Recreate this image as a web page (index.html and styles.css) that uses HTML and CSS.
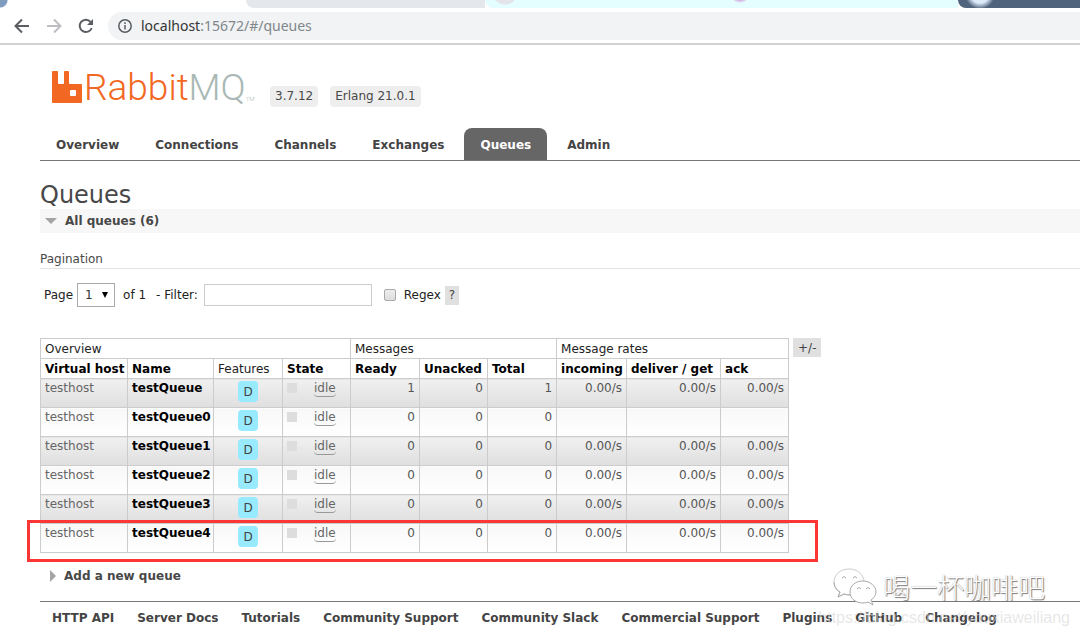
FILE: index.html
```html
<!DOCTYPE html>
<html lang="en">
<head>
    <meta charset="UTF-8">
    <meta name="viewport" content="width=device-width, initial-scale=1.0">
    <title>RabbitMQ Management</title>
    <link rel="stylesheet" href="styles.css">
</head>
<body>
    <!-- Browser bar -->
    <div class="tab-strip">
        <div class="strip-first"></div>
        <div class="strip-grey"></div>
        <div class="strip-cyan"></div>
        <div class="strip-dark"></div>
    </div>
    <div class="toolbar">
        <button type="button" aria-label="Back">
            <svg width="16" height="16" viewBox="0 0 16 16" fill="none" stroke="#5a5e63" stroke-width="2"><path d="M15 8H2M8 1.5L1.5 8L8 14.5"/></svg>
        </button>
        <button type="button" aria-label="Forward">
            <svg width="16" height="16" viewBox="0 0 16 16" fill="none" stroke="#bcbec1" stroke-width="2"><path d="M1 8H14M8 1.5L14.5 8L8 14.5"/></svg>
        </button>
        <button type="button" aria-label="Reload">
            <svg width="16" height="16" viewBox="0 0 16 16" fill="none" stroke="#5a5e63" stroke-width="2"><path d="M13.7 10A6.2 6.2 0 1 1 12.6 3.8"/><path d="M15 1V7H9Z" fill="#5a5e63" stroke="none"/></svg>
        </button>
        <div class="address">
            <svg width="14" height="14" viewBox="0 0 14 14" fill="none" stroke="#5a5e63" stroke-width="1.5"><circle cx="7" cy="7" r="6.2"/><path d="M7 6V10.5M7 3.3V5"/></svg>
            <span class="url"><b>localhost</b>:15672/#/queues</span>
        </div>
    </div>

    <div class="page">
        <!-- Header -->
        <div class="header">
            <a href="#" class="logo">
                <svg width="30" height="32" viewBox="0 0 30 32"><path fill="#f26822" fill-rule="evenodd" d="M1 0H5Q6 0 6 1V12Q6 13 7 13H11Q12 13 12 12V1Q12 0 13 0H16Q17 0 17 1V12Q17 13 18 13H29Q30 13 30 14V31Q30 32 29 32H1Q0 32 0 31V1Q0 0 1 0ZM19 19Q18 19 18 20V24Q18 25 19 25H23Q24 25 24 24V20Q24 19 23 19Z"/></svg>
                <span class="rabbit">Rabbit</span><span class="mq">MQ</span><span class="tm">TM</span>
            </a>
            <span class="version">3.7.12</span>
            <span class="version">Erlang 21.0.1</span>
        </div>

        <!-- Navigation -->
        <nav class="tabs">
            <a href="#">Overview</a>
            <a href="#">Connections</a>
            <a href="#">Channels</a>
            <a href="#">Exchanges</a>
            <a href="#" class="selected">Queues</a>
            <a href="#">Admin</a>
        </nav>

        <h1>Queues</h1>
        <h2 class="section open">All queues (6)</h2>

        <h3>Pagination</h3>
        <form class="filter">
            <label for="page">Page</label>
            <span class="select">
                <select id="page"><option>1</option></select>
            </span>
            <span class="of">of 1</span>
            <label for="filter" class="dash">- Filter:</label>
            <input type="text" id="filter">
            <input type="checkbox" id="regex">
            <label for="regex">Regex</label>
            <button type="button" class="help">?</button>
        </form>

        <!-- Queue list -->
        <div class="list">
            <div class="table-wrap">
                <table>
                    <colgroup>
                        <col class="c-vhost"><col class="c-name"><col class="c-num"><col class="c-narrow"><col class="c-num"><col class="c-narrow"><col class="c-num"><col class="c-in"><col class="c-get"><col class="c-narrow">
                    </colgroup>
                    <thead>
                        <tr class="groups">
                            <th colspan="4">Overview</th>
                            <th colspan="3">Messages</th>
                            <th colspan="3">Message rates</th>
                        </tr>
                        <tr>
                            <th>Virtual host</th>
                            <th>Name</th>
                            <th class="plain">Features</th>
                            <th>State</th>
                            <th>Ready</th>
                            <th>Unacked</th>
                            <th>Total</th>
                            <th>incoming</th>
                            <th>deliver / get</th>
                            <th>ack</th>
                        </tr>
                    </thead>
                    <tbody>
                        <tr><td>testhost</td><td><a href="#">testQueue</a></td><td class="c"><abbr class="tag">D</abbr></td><td class="state"><abbr>idle</abbr></td><td class="r">1</td><td class="r">0</td><td class="r">1</td><td class="r">0.00/s</td><td class="r">0.00/s</td><td class="r">0.00/s</td></tr>
                        <tr><td>testhost</td><td><a href="#">testQueue0</a></td><td class="c"><abbr class="tag">D</abbr></td><td class="state"><abbr>idle</abbr></td><td class="r">0</td><td class="r">0</td><td class="r">0</td><td></td><td></td><td></td></tr>
                        <tr><td>testhost</td><td><a href="#">testQueue1</a></td><td class="c"><abbr class="tag">D</abbr></td><td class="state"><abbr>idle</abbr></td><td class="r">0</td><td class="r">0</td><td class="r">0</td><td class="r">0.00/s</td><td class="r">0.00/s</td><td class="r">0.00/s</td></tr>
                        <tr><td>testhost</td><td><a href="#">testQueue2</a></td><td class="c"><abbr class="tag">D</abbr></td><td class="state"><abbr>idle</abbr></td><td class="r">0</td><td class="r">0</td><td class="r">0</td><td class="r">0.00/s</td><td class="r">0.00/s</td><td class="r">0.00/s</td></tr>
                        <tr><td>testhost</td><td><a href="#">testQueue3</a></td><td class="c"><abbr class="tag">D</abbr></td><td class="state"><abbr>idle</abbr></td><td class="r">0</td><td class="r">0</td><td class="r">0</td><td class="r">0.00/s</td><td class="r">0.00/s</td><td class="r">0.00/s</td></tr>
                        <tr><td>testhost</td><td><a href="#">testQueue4</a></td><td class="c"><abbr class="tag">D</abbr></td><td class="state"><abbr>idle</abbr></td><td class="r">0</td><td class="r">0</td><td class="r">0</td><td class="r">0.00/s</td><td class="r">0.00/s</td><td class="r">0.00/s</td></tr>
                    </tbody>
                </table>
                <div class="highlight"></div>
            </div>
            <button type="button" class="columns">+/-</button>
        </div>

        <h2 class="section">Add a new queue</h2>

        <!-- Footer -->
        <div class="footer">
            <a href="#">HTTP API</a>
            <a href="#">Server Docs</a>
            <a href="#">Tutorials</a>
            <a href="#">Community Support</a>
            <a href="#">Community Slack</a>
            <a href="#">Commercial Support</a>
            <a href="#">Plugins</a>
            <a href="#">GitHub</a>
            <a href="#">Changelog</a>
        </div>
    </div>

    <!-- Watermarks -->
    <div class="wechat">
        <svg width="44" height="38" viewBox="0 0 44 38" fill="#fff" stroke="#aaa" stroke-width="1">
            <path stroke="#ccc" d="M16 1C7 1 1 7 1 14C1 18 3 22 7 24L5 29L11 26Q14 27 18 27C26 26 31 21 31 14C31 7 25 1 16 1Z"/>
            <path fill="none" d="M1 14C1 18 3 22 7 24L5 29L11 26Q14 27 18 27"/>
            <path d="M30 13C22 13 17 18 17 24C17 31 23 35 30 35Q33 35 35 34L40 37L38 32C41 30 43 27 43 24C43 18 37 13 30 13Z"/>
            <path fill="none" d="M9 10Q11 7 13 10M20 10Q22 7 24 10M24 21Q26 18 28 21M33 21Q35 18 37 21"/>
        </svg>
        <span>喝一杯咖啡吧</span>
    </div>
    <div class="blog-url">https://blog.csdn.net/youxiaweiliang</div>
</body>
</html>
```

FILE: styles.css
```css
* {
    box-sizing: border-box;
}

body {
    margin: 0;
    position: relative;
    min-height: 100vh;
    overflow: hidden;
    background: #fff;
    color: #484848;
    font: 12px/16px "DejaVu Sans", Verdana, sans-serif;
}

a {
    color: #444;
    text-decoration: none;
}

button {
    border: 0;
    padding: 0;
    font: inherit;
    background: none;
}

svg {
    display: block;
    flex: none;
}

/* Browser bar */
.tab-strip {
    display: flex;
    height: 8px;
    background: #fff;
}

.strip-first {
    width: 246px;
    background: radial-gradient(circle at 0 0, #7d9cbf 7px, #fff 8px);
}

.strip-grey {
    width: 239px;
    background: #e4e8ec;
    border-radius: 0 0 0 8px;
}

.strip-cyan {
    flex: 1;
    background:
        radial-gradient(circle at 20px -8px, #e2e4ea 12px, transparent 13px),
        radial-gradient(circle at 255px -8px, #d5a5e0 8px, transparent 11px),
        #e4fdff;
    border-radius: 0 0 0 8px;
}

.strip-dark {
    width: 122px;
    background: radial-gradient(circle at 22px -6px, #dcecfb 9px, #50637c 15px);
    border-radius: 0 0 0 8px;
}

.toolbar {
    display: flex;
    align-items: center;
    gap: 16px;
    height: 37px;
    padding: 0 0 0 14px;
    border-bottom: 2px solid #d2d2d2;
}

.address {
    flex: 1;
    display: flex;
    align-items: center;
    gap: 9px;
    height: 28px;
    margin-left: -2px;
    padding-left: 10px;
    background: #f1f3f4;
    border-radius: 14px 0 0 14px;
}

.url {
    font: 14px/20px "Noto Sans", sans-serif;
    color: #80868b;
}

.url b {
    font-weight: normal;
    color: #333;
}

.page {
    padding-left: 40px;
}

/* Header */
.header {
    display: flex;
    align-items: flex-end;
    gap: 12px;
    height: 62px;
}

.logo {
    display: flex;
    align-items: flex-end;
    width: 206px;
    height: 36px;
    margin: 0 0 2px 12px;
    font: 300 37px/34px Roboto, "Liberation Sans", sans-serif;
}

.logo svg {
    margin: 0 2px 2px 0;
}

.rabbit {
    color: #f26822;
}

.mq {
    color: #a9b8b4;
}

.tm {
    font-size: 6px;
    line-height: 12px;
    color: #a9b8b4;
}

.version {
    height: 21px;
    padding: 0 5px;
    line-height: 21px;
    background: #eee;
    border-radius: 4px;
}

/* Navigation */
.tabs {
    display: flex;
    gap: 4px;
    margin-top: 21px;
    border-bottom: 1px solid #777;
}

.tabs a {
    padding: 9px 16px 7px;
    font-weight: bold;
    border-radius: 8px 8px 0 0;
}

.tabs .selected {
    background: #666;
    color: #fff;
}

h1 {
    margin: 21px 0 0;
    font-size: 24px;
    font-weight: normal;
    line-height: 27px;
}

.section {
    display: flex;
    align-items: center;
    gap: 8px;
    margin: 0;
    height: 24px;
    padding-left: 10px;
    font-size: 12px;
}

.section::before {
    content: "";
    border: 6px solid transparent;
    border-left-color: #a4a4a4;
    border-right-width: 0;
}

.section.open {
    padding-left: 5px;
    background: #f7f7f7;
}

.section.open::before {
    border: 6px solid transparent;
    border-top-color: #a4a4a4;
    border-bottom-width: 0;
}

h3 {
    margin: 18px 0 14px;
    padding-bottom: 1px;
    font-size: 12px;
    font-weight: normal;
    border-bottom: 1px solid #e4e4e4;
}

/* Pagination form */
.filter {
    display: flex;
    align-items: center;
    gap: 4px;
    height: 24px;
    padding-left: 4px;
    color: #222;
}

.select {
    position: relative;
}

.select::after {
    content: "";
    position: absolute;
    top: 9px;
    right: 7px;
    border: solid transparent;
    border-width: 6px 3px 0;
    border-top-color: #000;
}

.filter select {
    display: block;
    appearance: none;
    width: 38px;
    height: 24px;
    padding: 0 7px;
    border: 1px solid #aaa;
    border-radius: 0;
    background: #fff;
    font: inherit;
    color: #333;
}

.of {
    margin-left: 4px;
}

.dash {
    margin: 0 2px 0 6px;
}

.filter input[type="text"] {
    width: 168px;
    height: 22px;
    border: 1px solid #ccc;
}

.filter input[type="checkbox"] {
    appearance: none;
    width: 12px;
    height: 12px;
    margin: 0 4px 0 8px;
    border: 1px solid #aaa;
    border-radius: 2px;
    background: linear-gradient(#eee, #dcdcdc);
}

.help,
.columns {
    height: 19px;
    padding: 0 4px;
    background: #e0e0e0;
    color: #444;
}

.columns {
    padding: 0 5px;
}

/* Queue table */
.list {
    display: flex;
    align-items: flex-start;
    gap: 4px;
    margin: 31px 0 11px;
}

.table-wrap {
    position: relative;
}

table {
    width: 749px;
    table-layout: fixed;
    border-collapse: collapse;
}

.c-vhost {
    width: 87px;
}

.c-name {
    width: 86px;
}

.c-num {
    width: 69px;
}

.c-narrow {
    width: 68px;
}

.c-in {
    width: 70px;
}

.c-get {
    width: 94px;
}

th,
td {
    height: 20px;
    padding: 1px 4px;
    border: 1px solid #ccc;
    text-align: left;
    white-space: nowrap;
}

th {
    color: #000;
}

.groups th,
th.plain {
    font-weight: normal;
    color: #222;
}

td {
    height: 29px;
    vertical-align: top;
    color: #666;
    background: linear-gradient(#f8f8f8, #fff);
}

tbody tr:nth-child(odd) td {
    background: linear-gradient(#f0f0f0, #dfdfdf);
}

td a {
    font-weight: bold;
    color: #000;
}

td.r {
    text-align: right;
    color: #555;
}

td.c {
    text-align: center;
}

.tag {
    display: inline-block;
    width: 20px;
    height: 21px;
    margin-top: 1px;
    line-height: 22px;
    border-radius: 4px;
    background: #98ebff;
    color: #444;
}

.state::before {
    content: "";
    display: inline-block;
    width: 10px;
    height: 10px;
    margin-right: 17px;
    vertical-align: -1px;
    background: #ddd;
}

.state abbr {
    display: inline-block;
    border-bottom: 1px solid #999;
    border-radius: 4px;
}

/* Box drawn round the last queue */
.highlight {
    position: absolute;
    left: -13px;
    right: -29px;
    bottom: -9px;
    height: 42px;
    border: 3px solid #fc3535;
}

/* Footer */
.footer {
    display: flex;
    gap: 23px;
    margin-top: 13px;
    padding: 8px 12px;
    border-top: 1px solid #777;
    font-weight: bold;
    white-space: nowrap;
}

/* Watermarks */
.wechat {
    position: absolute;
    right: 35px;
    bottom: 30px;
    display: flex;
    align-items: center;
    gap: 6px;
    font: 300 27px/36px "Noto Sans CJK SC", sans-serif;
    color: #fff;
    text-shadow: 1px 1px 1px #777, 0 0 1px #aaa;
}

.blog-url {
    position: absolute;
    right: 10px;
    bottom: 9px;
    font: 16px/18px "Liberation Sans", Arial, sans-serif;
    color: rgba(215, 215, 215, 0.6);
}
```
